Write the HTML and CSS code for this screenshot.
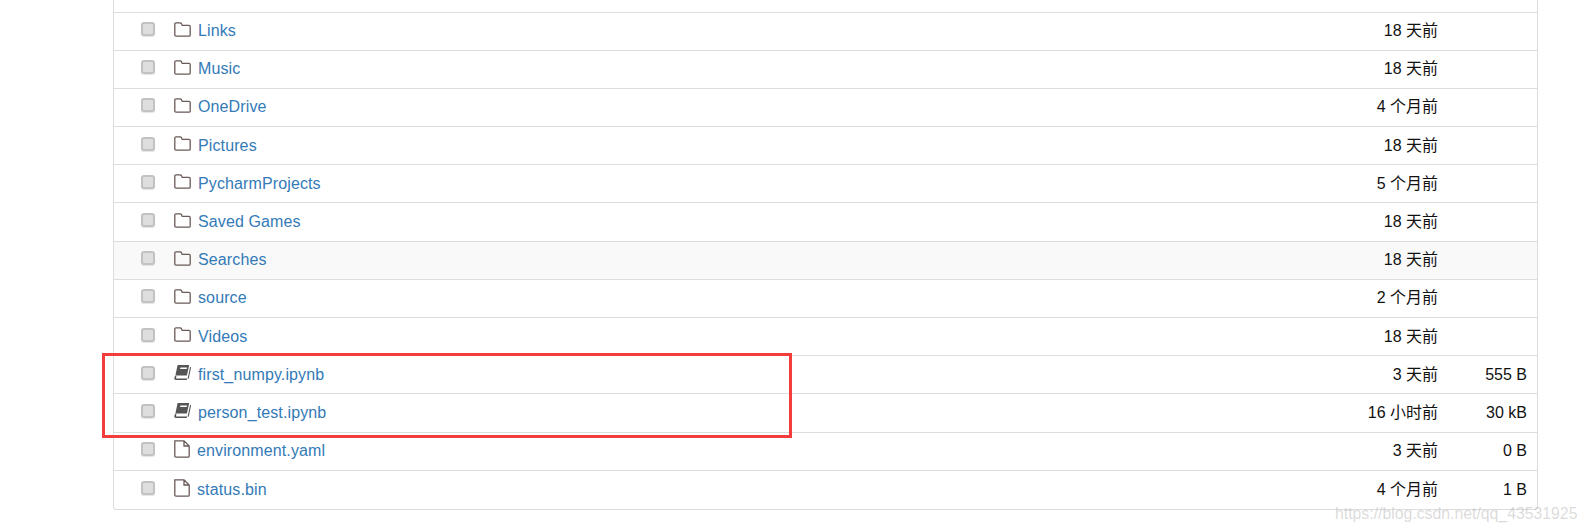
FILE: index.html
```html
<!DOCTYPE html>
<html lang="zh">
<head>
    <meta charset="UTF-8">
    <title>Jupyter Notebook</title>
    <link rel="stylesheet" href="styles.css">
</head>
<body>
    <svg class="defs" width="0" height="0">
        <symbol id="folder" viewBox="0 0 17 15">
            <path d="M.8 13V2Q.8.8 2 .8H6.2Q7 .8 7.4 1.6L8.2 3.4H15Q16.2 3.4 16.2 4.6V13Q16.2 14.2 15 14.2H2Q.8 14.2.8 13Z" fill="none" stroke="#6a5a58" stroke-width="1.3"/>
        </symbol>
        <symbol id="book" viewBox="0 0 17 15">
            <path d="M3.6 0H15.2L12.9 10.6H1.4Z" fill="#555"/>
            <path d="M1.4 10.6.2 13Q0 15 2 15H12.8L13.2 13.6H2.8Q1.6 13.6 2 12.6L2.6 11.4Z" fill="#555"/>
            <path d="M16.6 2 14.2 13.6" stroke="#555" stroke-width="1.1" fill="none"/>
            <path d="M6.4 2.4H13L12.7 3.9H6.1Z" fill="#fff"/>
        </symbol>
        <symbol id="file" viewBox="0 0 16 18">
            <path d="M.8.8H10L15.2 6V16Q15.2 17.2 14 17.2H2Q.8 17.2.8 16Z M10 .8V6H15.2" fill="none" stroke="#6a5a58" stroke-width="1.3"/>
        </symbol>
    </svg>

    <div class="panel">
        <div class="row row-cut"></div>
        <div class="row">
            <span class="check"></span>
            <svg class="icon"><use href="#folder"/></svg>
            <a class="name">Links</a>
            <span class="time">18 天前</span>
            <span class="size"></span>
        </div>
        <div class="row">
            <span class="check"></span>
            <svg class="icon"><use href="#folder"/></svg>
            <a class="name">Music</a>
            <span class="time">18 天前</span>
            <span class="size"></span>
        </div>
        <div class="row">
            <span class="check"></span>
            <svg class="icon"><use href="#folder"/></svg>
            <a class="name">OneDrive</a>
            <span class="time">4 个月前</span>
            <span class="size"></span>
        </div>
        <div class="row">
            <span class="check"></span>
            <svg class="icon"><use href="#folder"/></svg>
            <a class="name">Pictures</a>
            <span class="time">18 天前</span>
            <span class="size"></span>
        </div>
        <div class="row">
            <span class="check"></span>
            <svg class="icon"><use href="#folder"/></svg>
            <a class="name">PycharmProjects</a>
            <span class="time">5 个月前</span>
            <span class="size"></span>
        </div>
        <div class="row">
            <span class="check"></span>
            <svg class="icon"><use href="#folder"/></svg>
            <a class="name">Saved Games</a>
            <span class="time">18 天前</span>
            <span class="size"></span>
        </div>
        <div class="row row-hover">
            <span class="check"></span>
            <svg class="icon"><use href="#folder"/></svg>
            <a class="name">Searches</a>
            <span class="time">18 天前</span>
            <span class="size"></span>
        </div>
        <div class="row">
            <span class="check"></span>
            <svg class="icon"><use href="#folder"/></svg>
            <a class="name">source</a>
            <span class="time">2 个月前</span>
            <span class="size"></span>
        </div>
        <div class="row">
            <span class="check"></span>
            <svg class="icon"><use href="#folder"/></svg>
            <a class="name">Videos</a>
            <span class="time">18 天前</span>
            <span class="size"></span>
        </div>
        <div class="row">
            <span class="check"></span>
            <svg class="icon"><use href="#book"/></svg>
            <a class="name">first_numpy.ipynb</a>
            <span class="time">3 天前</span>
            <span class="size">555 B</span>
        </div>
        <div class="row">
            <span class="check"></span>
            <svg class="icon"><use href="#book"/></svg>
            <a class="name">person_test.ipynb</a>
            <span class="time">16 小时前</span>
            <span class="size">30 kB</span>
        </div>
        <div class="row">
            <span class="check"></span>
            <svg class="icon icon-file"><use href="#file"/></svg>
            <a class="name">environment.yaml</a>
            <span class="time">3 天前</span>
            <span class="size">0 B</span>
        </div>
        <div class="row">
            <span class="check"></span>
            <svg class="icon icon-file"><use href="#file"/></svg>
            <a class="name">status.bin</a>
            <span class="time">4 个月前</span>
            <span class="size">1 B</span>
        </div>
    </div>

    <div class="mark-box"></div>
    <div class="watermark">https://blog.csdn.net/qq_43531925</div>
</body>
</html>
```

FILE: styles.css
```css
* {
    margin: 0;
    padding: 0;
    box-sizing: border-box;
}

html, body {
    height: 532px;
    overflow: hidden;
}

body {
    background: #fff;
    position: relative;
    font-family: "Liberation Sans", "Noto Sans CJK SC", sans-serif;
    font-size: 16px;
    color: #111;
}

.defs {
    position: absolute;
}

.panel {
    margin-left: 113px;
    width: 1425px;
    height: 510px;
    border: solid #ddd;
    border-width: 0 1px 1px 1px;
    border-radius: 0 0 3px 3px;
}

.row {
    display: flex;
    align-items: center;
    height: 38.2px;
    border-bottom: 1px solid #ddd;
    padding: 0 10px 0 27px;
}

.row:last-child {
    border-bottom: none;
}

.row-cut {
    height: 12.5px;
}

.row-hover {
    background: #f9f9f9;
}

.check {
    width: 14px;
    height: 14px;
    margin: -4px 19px 0 0;
    border: 2px solid #c2c2c2;
    border-radius: 3px;
    background: #dedede;
    box-shadow: 0 1px 1px #e4e4e4;
}

.icon {
    width: 17px;
    height: 15px;
    margin: -4px 7px 0 0;
}

.icon-file {
    width: 16px;
    height: 18px;
}

.name {
    color: #337ab7;
    flex: 1;
    letter-spacing: .12px;
}

.time {
    width: 200px;
    text-align: right;
    margin-top: -4px;
}

.size {
    width: 89px;
    text-align: right;
}

.mark-box {
    position: absolute;
    left: 102px;
    top: 353px;
    width: 690px;
    height: 85px;
    border: 3px solid #f33c3c;
}

.watermark {
    position: absolute;
    left: 1335px;
    top: 505px;
    font-size: 15.8px;
    color: rgba(150, 150, 150, .35);
    white-space: nowrap;
}
```
